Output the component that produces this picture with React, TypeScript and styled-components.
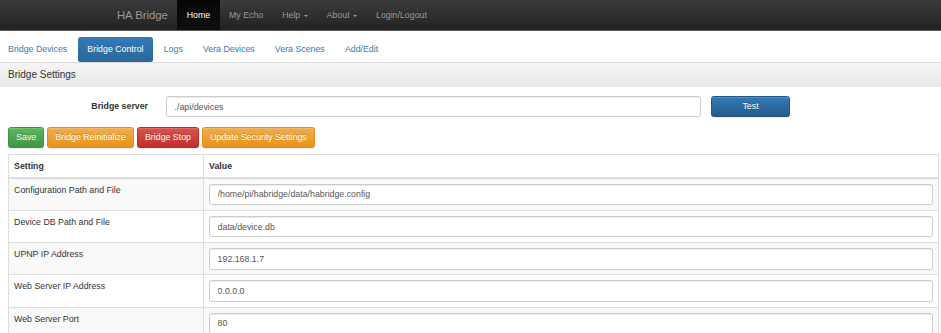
import styled, { createGlobalStyle, css } from 'styled-components';

const GlobalStyle = createGlobalStyle`
  html, body {
    margin: 0;
    padding: 0;
    background: #fff;
    overflow: hidden;
  }
  body {
    font-family: "Liberation Sans", Arial, Helvetica, sans-serif;
    font-size: 8.8px;
    line-height: 12.6px;
    color: #333;
  }
  * {
    box-sizing: border-box;
  }
`;

type Variant = 'primary' | 'success' | 'warning' | 'danger';

const BUTTON_COLORS: Record<Variant, { from: string; to: string; border: string }> = {
  primary: { from: '#337ab7', to: '#265a88', border: '#245580' },
  success: { from: '#5cb85c', to: '#419641', border: '#3e8f3e' },
  warning: { from: '#f0ad4e', to: '#eb9316', border: '#e38d13' },
  danger: { from: '#d9534f', to: '#c12e2a', border: '#b92c28' },
};

const NAV_LINKS = [
  { label: 'Home', active: true },
  { label: 'My Echo' },
  { label: 'Help', caret: true },
  { label: 'About', caret: true },
  { label: 'Login/Logout' },
];

const TABS = ['Bridge Devices', 'Bridge Control', 'Logs', 'Vera Devices', 'Vera Scenes', 'Add/Edit'];

const SETTINGS = [
  { name: 'Configuration Path and File', value: '/home/pi/habridge/data/habridge.config' },
  { name: 'Device DB Path and File', value: 'data/device.db' },
  { name: 'UPNP IP Address', value: '192.168.1.7' },
  { name: 'Web Server IP Address', value: '0.0.0.0' },
  { name: 'Web Server Port', value: '80' },
];

function App() {
  return (
    <>
      <GlobalStyle />
      <Navbar>
        <Brand>HA Bridge</Brand>
        <NavList>
          {NAV_LINKS.map((link) => (
            <NavItem key={link.label} active={link.active}>
              {link.label}
              {link.caret && <Caret />}
            </NavItem>
          ))}
        </NavList>
      </Navbar>

      <Main>
        <Pills>
          {TABS.map((tab) => (
            <Pill key={tab} active={tab === 'Bridge Control'}>
              {tab}
            </Pill>
          ))}
        </Pills>

        <Panel>
          <PanelHeading>Bridge Settings</PanelHeading>
          <PanelBody>
            <FormRow>
              <FormLabel>Bridge server</FormLabel>
              <ServerInput defaultValue="./api/devices" />
              <Button variant="primary" wide>
                Test
              </Button>
            </FormRow>

            <ButtonRow>
              <Button variant="success">Save</Button>
              <Button variant="warning">Bridge Reinitialize</Button>
              <Button variant="danger">Bridge Stop</Button>
              <Button variant="warning">Update Security Settings</Button>
            </ButtonRow>

            <SettingsTable>
              <thead>
                <tr>
                  <HeadCell>Setting</HeadCell>
                  <HeadCell>Value</HeadCell>
                </tr>
              </thead>
              <tbody>
                {SETTINGS.map((row) => (
                  <tr key={row.name}>
                    <NameCell>{row.name}</NameCell>
                    <ValueCell>
                      <TextInput defaultValue={row.value} />
                    </ValueCell>
                  </tr>
                ))}
              </tbody>
            </SettingsTable>
          </PanelBody>
        </Panel>
      </Main>
    </>
  );
}

const Navbar = styled.nav`
  display: flex;
  align-items: stretch;
  height: 31px;
  padding-left: 107.5px;
  background-image: linear-gradient(to bottom, #3c3c3c 0, #222 100%);
  border-bottom: 1px solid #5a5a5a;
`;

const Brand = styled.a`
  padding: 0 9.45px;
  font-size: 11.3px;
  line-height: 30px;
  color: #9d9d9d;
  text-shadow: 0 -1px 0 rgba(0, 0, 0, 0.25);
`;

const NavList = styled.ul`
  display: flex;
  margin: 0;
  padding: 0;
  list-style: none;
`;

const NavItem = styled.li<{ active?: boolean }>`
  display: flex;
  align-items: center;
  padding: 0 9.45px;
  line-height: 30px;
  color: #9d9d9d;
  text-shadow: 0 -1px 0 rgba(0, 0, 0, 0.25);
  ${({ active }) =>
    active &&
    css`
      color: #fff;
      background-image: linear-gradient(to bottom, #080808 0, #0f0f0f 100%);
      box-shadow: inset 0 3px 9px rgba(0, 0, 0, 0.25);
    `}
`;

const Caret = styled.span`
  display: inline-block;
  width: 0;
  height: 0;
  margin-left: 3.5px;
  margin-top: 1px;
  border-top: 2.5px solid currentColor;
  border-left: 2.5px solid transparent;
  border-right: 2.5px solid transparent;
`;

const Main = styled.main`
  width: 950px;
  margin-left: -1.4px;
`;

const Pills = styled.ul`
  display: flex;
  gap: 1.26px;
  margin: 0;
  padding: 6px 0 0;
  list-style: none;
`;

const Pill = styled.li<{ active?: boolean }>`
  padding: 6.1px 9.45px;
  line-height: 12.6px;
  border-radius: 2.5px;
  color: #337ab7;
  ${({ active }) =>
    active &&
    css`
      color: #fff;
      background-image: linear-gradient(to bottom, #337ab7 0, #2b669a 100%);
    `}
`;

const Panel = styled.section`
  border-top: 1px solid #ddd;
`;

const PanelHeading = styled.h3`
  margin: 0;
  padding: 6px 9.45px;
  font-size: 10px;
  font-weight: 400;
  line-height: 12.6px;
  color: #333;
  background-image: linear-gradient(to bottom, #f5f5f5 0, #e8e8e8 100%);
`;

const PanelBody = styled.div`
  padding: 8.6px 9.45px 0;
`;

const FormRow = styled.div`
  display: flex;
  align-items: center;
  margin-bottom: 9.45px;
`;

const FormLabel = styled.label`
  width: 140px;
  margin-right: 18px;
  font-weight: 700;
  text-align: right;
`;

const inputBase = css`
  height: 21.4px;
  padding: 0 7.56px;
  font-family: inherit;
  font-size: 8.8px;
  color: #555;
  background: #fff;
  border: 1px solid #ccc;
  border-radius: 2.5px;
  box-shadow: inset 0 1px 1px rgba(0, 0, 0, 0.075);
  outline: none;
`;

const ServerInput = styled.input`
  ${inputBase};
  width: 535px;
  margin-right: 10px;
`;

const TextInput = styled.input`
  ${inputBase};
  display: block;
  width: 100%;
`;

const ButtonRow = styled.div`
  display: flex;
  gap: 3px;
  margin-bottom: 5.8px;
`;

const Button = styled.button<{ variant: Variant; wide?: boolean }>`
  height: 21.4px;
  padding: 0 7.1px;
  width: ${({ wide }) => (wide ? '79px' : 'auto')};
  font-family: inherit;
  font-size: 8.8px;
  line-height: 12.6px;
  color: #fff;
  text-shadow: 0 -1px 0 rgba(0, 0, 0, 0.2);
  border: 1px solid ${({ variant }) => BUTTON_COLORS[variant].border};
  border-radius: 2.5px;
  background-image: ${({ variant }) =>
    `linear-gradient(to bottom, ${BUTTON_COLORS[variant].from} 0, ${BUTTON_COLORS[variant].to} 100%)`};
  box-shadow: inset 0 1px 0 rgba(255, 255, 255, 0.15), 0 1px 1px rgba(0, 0, 0, 0.075);
`;

const SettingsTable = styled.table`
  width: 931px;
  border-collapse: collapse;
  border: 1px solid #ddd;

  tbody tr:nth-of-type(odd) {
    background-color: #f9f9f9;
  }
`;

const HeadCell = styled.th`
  padding: 4.6px 5px;
  font-weight: 700;
  text-align: left;
  border: 1px solid #ddd;
  border-bottom-width: 2px;
  &:first-child {
    width: 195px;
  }
`;

const NameCell = styled.td`
  padding: 5px 5px 4.8px;
  vertical-align: top;
  border: 1px solid #ddd;
`;

const ValueCell = styled.td`
  padding: 5px 5px 4.8px;
  vertical-align: top;
  border: 1px solid #ddd;
`;

export default App;
